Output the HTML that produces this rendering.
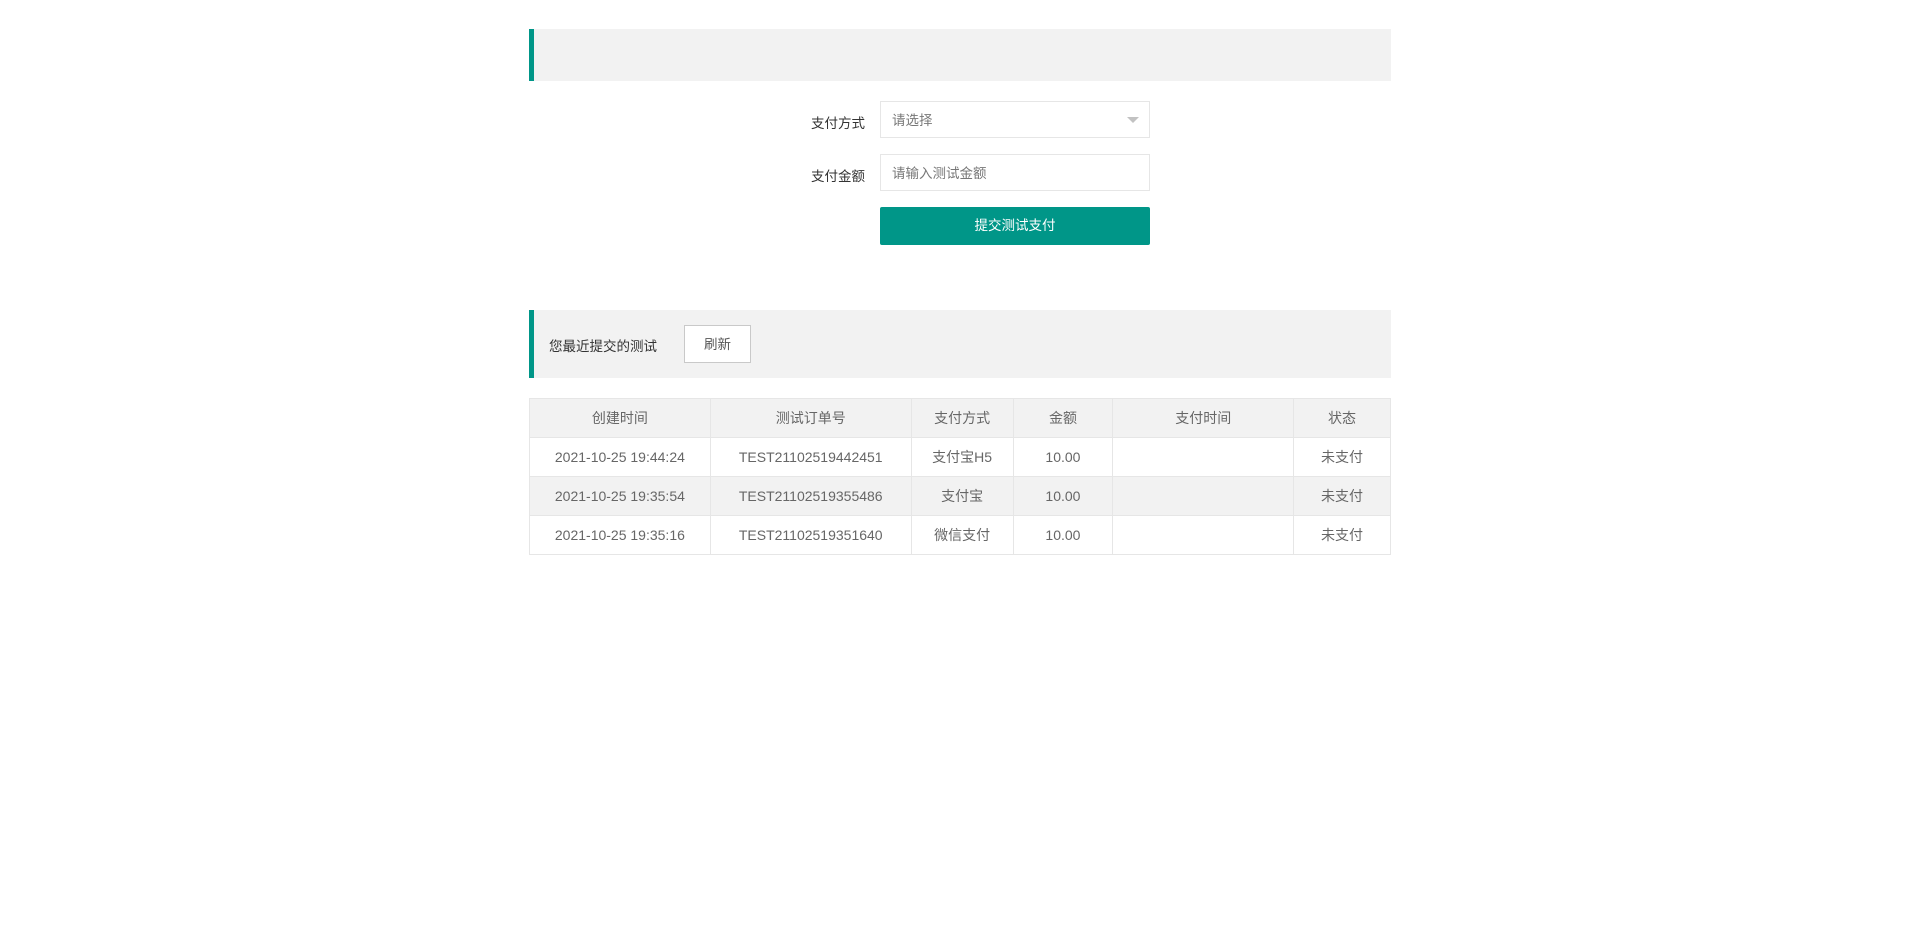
<!DOCTYPE html>
<html><head><meta charset="utf-8"><style>
*{box-sizing:border-box;margin:0;padding:0}
body{width:1920px;height:935px;background:#fff;font-family:"Liberation Sans","Noto Sans CJK SC",sans-serif;font-size:14px;color:#333;position:relative;overflow:hidden}
.bar{position:absolute;left:529px;width:862px;background:#f2f2f2;border-left:5px solid #009688}
.lbl{position:absolute;width:100px;text-align:right;left:765px;color:#333;font-size:13.5px}
.inp{position:absolute;left:880px;width:270px;height:37px;border:1px solid #e6e6e6;background:#fff;color:#777;padding-left:11px;line-height:37px;font-size:13.5px}
.btn{position:absolute;left:880px;top:207px;width:270px;height:38px;background:#009688;color:#fff;text-align:center;line-height:38px;border-radius:2px;font-size:13.5px}
.arrow{position:absolute;right:10px;top:15px;width:0;height:0;border-left:6px solid transparent;border-right:6px solid transparent;border-top:6px solid #c2c2c2}
table{position:absolute;left:529px;top:398px;width:862px;border-collapse:collapse;color:#666}
td,th{border:1px solid #e6e6e6;height:39px;text-align:center;font-weight:normal}
th{background:#f2f2f2}
tr.g td{background:#f2f2f2}
</style></head><body>
<div class="bar" style="top:29px;height:52px"></div>
<div class="lbl" style="top:112px">支付方式</div>
<div class="inp" style="top:101px">请选择<span class="arrow"></span></div>
<div class="lbl" style="top:165px">支付金额</div>
<div class="inp" style="top:154px">请输入测试金额</div>
<div class="btn">提交测试支付</div>
<div class="bar" style="top:310px;height:68px"></div>
<div style="position:absolute;left:549px;top:335px;color:#333;font-size:13.5px">您最近提交的测试</div>
<div style="position:absolute;left:684px;top:325px;width:67px;height:38px;border:1px solid #c9c9c9;background:#fff;text-align:center;line-height:38px;color:#555;font-size:13.5px">刷新</div>
<table>
<colgroup><col style="width:181px"><col style="width:201px"><col style="width:102px"><col style="width:100px"><col style="width:181px"><col style="width:97px"></colgroup>
<tr><th>创建时间</th><th>测试订单号</th><th>支付方式</th><th>金额</th><th>支付时间</th><th>状态</th></tr>
<tr><td>2021-10-25 19:44:24</td><td>TEST21102519442451</td><td>支付宝H5</td><td>10.00</td><td></td><td>未支付</td></tr>
<tr class="g"><td>2021-10-25 19:35:54</td><td>TEST21102519355486</td><td>支付宝</td><td>10.00</td><td></td><td>未支付</td></tr>
<tr><td>2021-10-25 19:35:16</td><td>TEST21102519351640</td><td>微信支付</td><td>10.00</td><td></td><td>未支付</td></tr>
</table>
</body></html>
